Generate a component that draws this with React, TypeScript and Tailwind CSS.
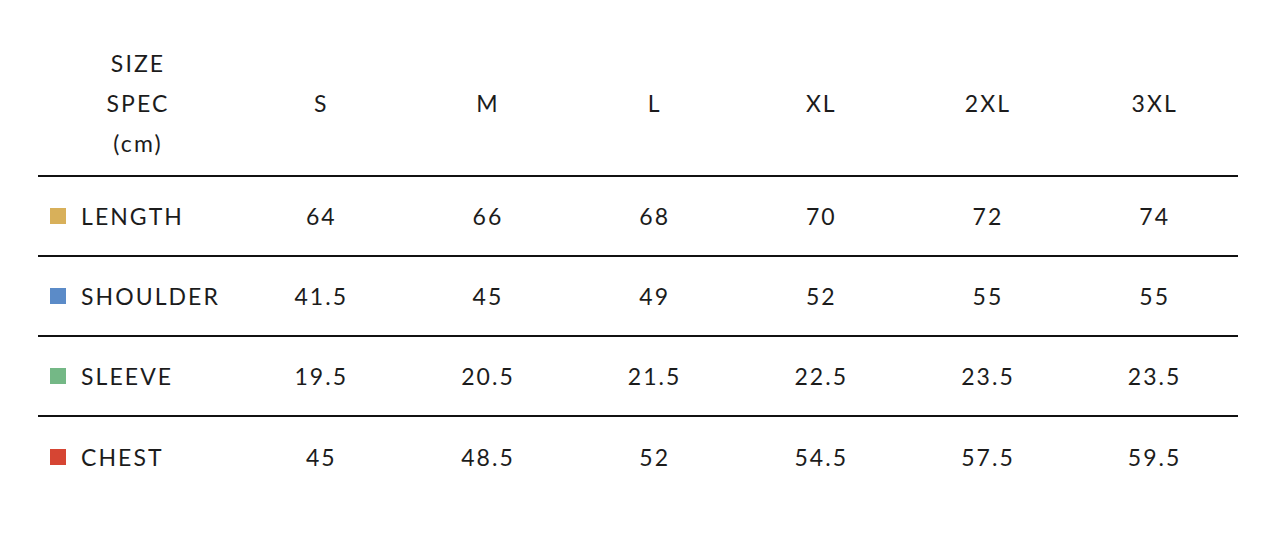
const sizes = ["S", "M", "L", "XL", "2XL", "3XL"];

const rows = [
  { label: "LENGTH", color: "bg-[#d8b05a]", values: ["64", "66", "68", "70", "72", "74"] },
  { label: "SHOULDER", color: "bg-[#5b8bc8]", values: ["41.5", "45", "49", "52", "55", "55"] },
  { label: "SLEEVE", color: "bg-[#74b886]", values: ["19.5", "20.5", "21.5", "22.5", "23.5", "23.5"] },
  { label: "CHEST", color: "bg-[#d64533]", values: ["45", "48.5", "52", "54.5", "57.5", "59.5"] },
];

export default function App() {
  return (
    <div className="w-[1276px] h-[536px] bg-white text-[#1c1c1c] font-['Lato','Liberation_Sans',sans-serif] text-[23px] tracking-[0.09em]">
      <div className="ml-[38px] w-[1200px] pt-[43px]">
        {/* Header */}
        <div className="grid grid-cols-[200px_repeat(6,1fr)] border-b-2 border-[#111] pb-[12px]">
          <div className="flex flex-col items-center leading-[40px]">
            <span>SIZE</span>
            <span>SPEC</span>
            <span>(cm)</span>
          </div>
          {sizes.map((s) => (
            <div key={s} className="flex items-center justify-center leading-[40px]">
              {s}
            </div>
          ))}
        </div>

        {/* Rows */}
        {rows.map((r, i) => (
          <div
            key={r.label}
            className={
              "grid grid-cols-[200px_repeat(6,1fr)] h-[80px] items-center " +
              (i < rows.length - 1 ? "border-b-2 border-[#111]" : "")
            }
          >
            <div className="flex items-center gap-[15px] pl-[12px]">
              <span className={"w-[16px] h-[16px] " + r.color} />
              <span>{r.label}</span>
            </div>
            {r.values.map((v, j) => (
              <div key={j} className="text-center">
                {v}
              </div>
            ))}
          </div>
        ))}
      </div>
    </div>
  );
}
